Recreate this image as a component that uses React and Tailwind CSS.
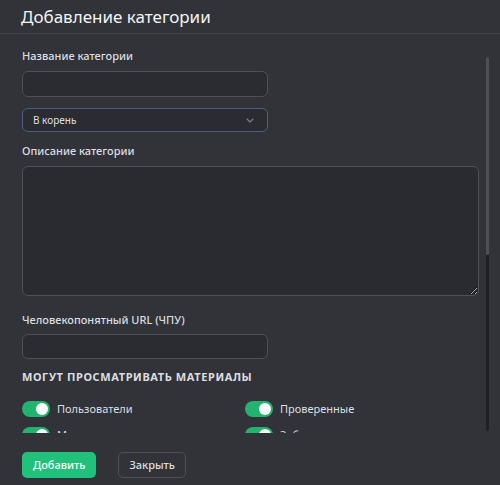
import { useState } from "react"

const Toggle = ({ on, onChange, label }) => (
  <label className="flex items-center gap-[7px] cursor-pointer">
    <button
      type="button"
      onClick={onChange}
      className={`relative w-[28px] h-[16px] rounded-full shrink-0 ${on ? "bg-[#23b36f]" : "bg-[#4e5058]"}`}
    >
      <span
        className={`absolute top-[2px] w-[12px] h-[12px] rounded-full bg-white ${on ? "left-[14px]" : "left-[2px]"}`}
      ></span>
    </button>
    <span className="text-[11px] leading-[14px] text-[#dbdee1]">{label}</span>
  </label>
)

const App = () => {
  const [roles, setRoles] = useState({
    users: true,
    verified: true,
    moderators: true,
    banned: true,
  })

  const toggle = (key) => setRoles(prev => ({ ...prev, [key]: !prev[key] }))

  return (
    <div
      className="w-[500px] h-[485px] bg-[#313338] flex flex-col overflow-hidden"
      style={{ fontFamily: '"Noto Sans", "Open Sans", sans-serif' }}
    >
      <div className="h-[34px] shrink-0 border-b border-[#3f4147] px-[21px] flex items-center">
        <h1 className="text-[17px] leading-[22px] text-[#f2f3f5] pt-[1px]">Добавление категории</h1>
      </div>

      <div className="relative h-[399px] shrink-0 overflow-hidden">
        <div className="pl-[22px] pr-[21px] pt-[15px] flex flex-col">
          <label className="text-[11px] leading-[14px] font-medium text-[#dbdee1]">Название категории</label>
          <input
            type="text"
            className="mt-[8px] w-[246px] h-[26px] rounded-[6px] bg-[#2b2c31] border border-[#4e5058] px-[10px] text-[11px] text-[#dbdee1] outline-none"
          />
          <div className="mt-[11px] w-[246px] h-[24px] rounded-[6px] bg-[#2b2c31] border border-[#4b5c85] pl-[10px] pr-[13px] flex items-center justify-between">
            <span className="text-[10px] leading-[12px] text-[#dbdee1]">В корень</span>
            <svg width="8" height="5" viewBox="0 0 8 5" fill="none">
              <path d="M1 1l3 3 3-3" stroke="#7d818a" strokeWidth="1.1" strokeLinecap="round" strokeLinejoin="round" />
            </svg>
          </div>

          <label className="mt-[12px] text-[11px] leading-[14px] font-medium text-[#dbdee1]">Описание категории</label>
          <textarea
            className="mt-[8px] w-full h-[130px] rounded-[6px] bg-[#2a2b30] border border-[#4e5058] px-[10px] py-[6px] text-[11px] text-[#dbdee1] outline-none resize-y"
          ></textarea>

          <label className="mt-[17px] text-[11px] leading-[14px] font-medium text-[#dbdee1]">Человекопонятный URL (ЧПУ)</label>
          <input
            type="text"
            className="mt-[7px] w-[246px] h-[25px] rounded-[6px] bg-[#2b2c31] border border-[#4e5058] px-[10px] text-[11px] text-[#dbdee1] outline-none"
          />

          <h2 className="mt-[11px] text-[11px] leading-[14px] font-bold tracking-[0.6px] uppercase text-[#dbdee1]">
            Могут просматривать материалы
          </h2>

          <div className="mt-[17px] grid grid-cols-[223px_1fr] gap-y-[10px]">
            <Toggle on={roles.users} onChange={() => toggle("users")} label="Пользователи" />
            <Toggle on={roles.verified} onChange={() => toggle("verified")} label="Проверенные" />
            <Toggle on={roles.moderators} onChange={() => toggle("moderators")} label="Модераторы" />
            <Toggle on={roles.banned} onChange={() => toggle("banned")} label="Забаненные" />
          </div>
        </div>

        <div className="absolute right-[11px] top-[23px] bottom-[2px] w-[3px] bg-[#1f2023] rounded-full">
          <div className="h-[198px] w-full bg-[#4e5058] rounded-full"></div>
        </div>
      </div>

      <div className="flex items-start gap-[22px] pl-[22px] pt-[19px]">
        <button className="h-[26px] px-[11px] rounded-[5px] bg-[#20c17a] text-[11px] font-medium text-white">
          Добавить
        </button>
        <button className="h-[26px] px-[10px] rounded-[5px] border border-[#4e5058] text-[11px] font-medium text-[#dbdee1]">
          Закрыть
        </button>
      </div>
    </div>
  )
}

export default App
